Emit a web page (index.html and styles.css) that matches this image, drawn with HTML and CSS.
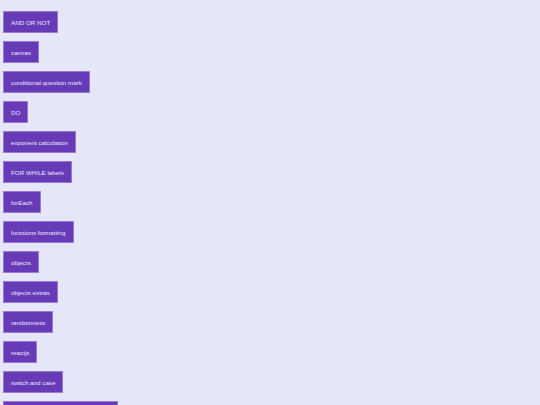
FILE: index.html
```html
<!DOCTYPE html>
<html lang="en">

<head>
    <meta charset="UTF-8">
    <meta name="viewport" content="width=device-width, initial-scale=1.0">
    <title>JS exercises</title>
    <link rel="stylesheet" href="styles.css">
</head>

<body>

    <div class="lesson-list">
        <a class="lesson-button" href="#">AND OR NOT</a>
        <a class="lesson-button" href="#">canvas</a>
        <a class="lesson-button" href="#">conditional question mark</a>
        <a class="lesson-button" href="#">DO</a>
        <a class="lesson-button" href="#">exponent calculation</a>
        <a class="lesson-button" href="#">FOR WHILE labels</a>
        <a class="lesson-button" href="#">forEach</a>
        <a class="lesson-button" href="#">functions formatting</a>
        <a class="lesson-button" href="#">objects</a>
        <a class="lesson-button" href="#">objects extras</a>
        <a class="lesson-button" href="#">randomness</a>
        <a class="lesson-button" href="#">reactjs</a>
        <a class="lesson-button" href="#">switch and case</a>
        <a class="lesson-button" href="#">template literals and string methods</a>
    </div>

</body>

</html>
```

FILE: styles.css
```css
body {
    margin: 0;
    background-color: #e6e6fa;
    font-family: "Liberation Sans", Arial, sans-serif;
}

.lesson-list {
    display: flex;
    flex-direction: column;
    align-items: flex-start;
    gap: 8px;
    padding: 11px 0 0 3px;
}

.lesson-button {
    display: flex;
    align-items: center;
    box-sizing: border-box;
    height: 22px;
    padding: 0 7px;
    background-color: #673ab7;
    border: 1px solid #9a78d6;
    color: #ece8fb;
    font-size: 6.25px;
    text-decoration: none;
    white-space: nowrap;
}
```
